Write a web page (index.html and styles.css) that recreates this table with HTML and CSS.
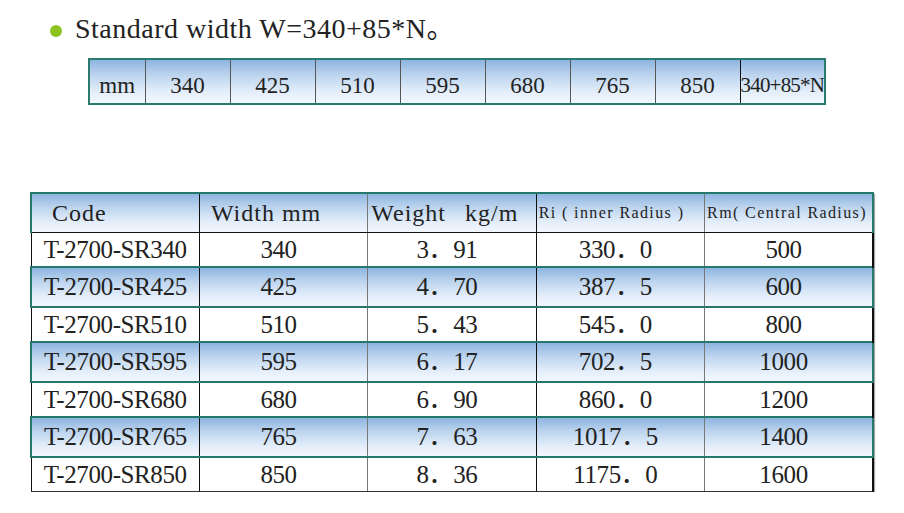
FILE: index.html
```html
<!DOCTYPE html>
<html lang="en">
<head>
    <meta charset="UTF-8">
    <meta name="viewport" content="width=device-width, initial-scale=1.0">
    <title>Standard width</title>
    <link rel="stylesheet" href="styles.css">
</head>
<body>
    <div class="page">
        <h1 class="title"><span class="dot"></span>Standard width W=340+85*N。</h1>

        <table class="widths">
            <colgroup>
                <col class="unit-col">
                <col span="8">
            </colgroup>
            <tr>
                <td class="unit">mm</td>
                <td>340</td>
                <td>425</td>
                <td>510</td>
                <td>595</td>
                <td>680</td>
                <td>765</td>
                <td>850</td>
                <td class="formula">340+85*N</td>
            </tr>
        </table>

        <table class="specs">
            <tr class="head">
                <th class="code-head">Code</th>
                <th class="width-head">Width mm</th>
                <th class="weight-head">Weight kg/m</th>
                <th class="small">Ri ( inner Radius )</th>
                <th class="small">Rm( Central Radius)</th>
            </tr>
            <tr>
                <td>T-2700-SR340</td><td>340</td><td>3．91</td><td>330．0</td><td>500</td>
            </tr>
            <tr class="shade">
                <td>T-2700-SR425</td><td>425</td><td>4．70</td><td>387．5</td><td>600</td>
            </tr>
            <tr>
                <td>T-2700-SR510</td><td>510</td><td>5．43</td><td>545．0</td><td>800</td>
            </tr>
            <tr class="shade">
                <td>T-2700-SR595</td><td>595</td><td>6．17</td><td>702．5</td><td>1000</td>
            </tr>
            <tr>
                <td>T-2700-SR680</td><td>680</td><td>6．90</td><td>860．0</td><td>1200</td>
            </tr>
            <tr class="shade">
                <td>T-2700-SR765</td><td>765</td><td>7．63</td><td>1017．5</td><td>1400</td>
            </tr>
            <tr>
                <td>T-2700-SR850</td><td>850</td><td>8．36</td><td>1175．0</td><td>1600</td>
            </tr>
        </table>
    </div>
</body>
</html>
```
FILE: styles.css
```css
body {
    margin: 0;
    background: #fff;
    color: #222;
}

.page {
    width: 904px;
}

.title {
    display: flex;
    align-items: center;
    gap: 13px;
    margin: 0;
    padding: 14px 0 0 50px;
    height: 30px;
    font-family: "Liberation Serif", "Noto Sans CJK SC", serif;
    font-size: 28px;
    font-weight: normal;
    letter-spacing: 0.5px;
    line-height: 30px;
    color: #222;
}

.dot {
    width: 12px;
    height: 12px;
    border-radius: 50%;
    background: #8dc21f;
    margin-top: 4px;
}

/* small width row */
.widths {
    margin: 14px 0 0 88px;
    width: 738px;
    height: 47px;
    border-collapse: collapse;
    border: 2px solid #2b7a6e;
    table-layout: fixed;
    font-family: "Liberation Serif", serif;
    font-size: 23px;
}

.unit-col {
    width: 56px;
}

.widths td {
    padding: 8px 0 0;
    text-align: center;
    border-left: 1px solid #555;
    background: linear-gradient(to bottom, #8db4e0 0%, #bcd4ee 35%, #e4eefa 75%, #f2f7fd 100%);
    white-space: nowrap;
}

.widths td.unit {
    border-left: none;
}

.widths td.formula {
    border-left-color: #111;
    font-size: 21px;
    letter-spacing: -0.8px;
    text-align: left;
}

/* spec table */
.specs {
    margin: 87px 0 0 30px;
    width: 844px;
    border-collapse: collapse;
    table-layout: fixed;
    font-family: "Liberation Serif", "Noto Sans CJK SC", serif;
    box-shadow: 1px 2px 1px #aaa;
}

.specs th,
.specs td {
    padding: 0;
    border-right: 1px solid #111;
    border-left: 1px solid #111;
    white-space: nowrap;
    line-height: 26px;
}

.specs th:nth-child(2),
.specs td:nth-child(2),
.specs th:nth-child(4),
.specs td:nth-child(4) {
    border-right-color: #777;
}

.specs td {
    height: 33px;
    font-size: 25px;
    letter-spacing: -0.4px;
    text-align: center;
    padding-right: 10px;
}

.specs td:first-child {
    padding-right: 0;
}

.specs tr:last-child td {
    border-bottom: 1px solid #333;
}

.specs td:last-child {
    border-right: 2px solid #111;
}

.head th,
.shade td {
    background: linear-gradient(to bottom, #8db4e0 0%, #bcd4ee 35%, #e4eefa 75%, #f2f7fd 100%);
}

.head th {
    height: 38px;
    font-size: 24px;
    font-weight: normal;
    letter-spacing: 1px;
    text-align: left;
    padding-left: 3px;
    border-top: 2px solid #25786b;
    border-bottom: 1px solid #111;
}

.head th:first-child {
    border-left: 2px solid #25786b;
}

.head th:last-child {
    border-right: 2px solid #25786b;
}

.head th.code-head {
    padding-left: 20px;
}

.head th.width-head {
    padding-left: 11px;
}

.head th.weight-head {
    word-spacing: 12px;
}

.head th.small {
    font-size: 16px;
    letter-spacing: 1.4px;
    padding-left: 2px;
}

.shade td {
    height: 38px;
    border-top: 2px solid #25786b;
    border-bottom: 2px solid #25786b;
}

.shade td:first-child {
    border-left: 2px solid #25786b;
}

.shade td:last-child {
    border-right: 2px solid #25786b;
}
```
